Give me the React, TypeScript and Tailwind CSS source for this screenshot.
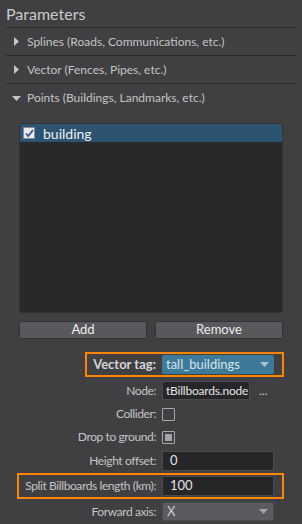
import React from 'react'

const sections = [
  { name: 'Splines (Roads, Communications, etc.)', open: false },
  { name: 'Vector (Fences, Pipes, etc.)', open: false },
  { name: 'Points (Buildings, Landmarks, etc.)', open: true },
]

function Arrow({ open }: { open: boolean }) {
  return open ? (
    <svg width="9" height="5" viewBox="0 0 9 5" className="mr-[6px]">
      <path d="M0 0h9L4.5 5z" fill="#c4c4c4" />
    </svg>
  ) : (
    <svg width="5" height="9" viewBox="0 0 5 9" className="ml-[2px] mr-[8px]">
      <path d="M0 0l5 4.5L0 9z" fill="#c4c4c4" />
    </svg>
  )
}

function Caret({ color }: { color: string }) {
  return (
    <svg width="9" height="5" viewBox="0 0 9 5">
      <path d="M0 0h9L4.5 5z" fill={color} />
    </svg>
  )
}

function Row({
  label,
  bold,
  highlight,
  className,
  children,
}: {
  label: string
  bold?: boolean
  highlight?: boolean
  className?: string
  children: React.ReactNode
}) {
  return (
    <div className={`flex justify-end pr-[18px] ${className ?? ''}`}>
      <div
        className={`flex items-center gap-[6px] ${
          highlight ? 'border-2 border-[#ff8400] pl-[6px] pr-[8px]' : 'pr-[10px]'
        }`}
      >
        <span
          className={`whitespace-nowrap text-right ${
            bold ? 'text-[13px] font-bold text-[#d4d4d4]' : 'text-[12px] tracking-[-0.4px] text-[#c4c4c4]'
          }`}
        >
          {label}
        </span>
        <div className="w-[112px] flex items-center">{children}</div>
      </div>
    </div>
  )
}

export default function App() {
  return (
    <div
      className="w-[302px] h-[524px] bg-[#404043] overflow-hidden"
      style={{ fontFamily: 'Lato, "Noto Sans", sans-serif' }}
    >
      <div className="px-[6px]">
        <div className="h-[28px] flex items-center border-b border-[#2a2a2c] text-[16px] text-[#cacaca]">
          Parameters
        </div>
        {sections.map((s, i) => (
          <div
            key={s.name}
            className={`h-[28px] flex items-center pl-[6px] text-[12px] text-[#c4c4c4] ${
              i < 2 ? 'border-b border-[#2a2a2c]' : ''
            }`}
          >
            <Arrow open={s.open} />
            {s.name}
          </div>
        ))}
      </div>

      <div className="ml-[19px] mr-[19px] mt-[11px] h-[190px] bg-[#29292b] border border-[#333336] rounded-[2px]">
        <div className="h-[18px] bg-[#2c5470] flex items-center pl-[3px]">
          <div className="w-[12px] h-[12px] bg-[#e8e8ec] border border-[#8a8a90] flex items-center justify-center">
            <svg width="9" height="9" viewBox="0 0 9 9">
              <path d="M1 4.5l2.2 2.5L8 1" stroke="#3a4fa0" strokeWidth="1.8" fill="none" />
            </svg>
          </div>
          <span className="ml-[8px] text-[14px] text-[#f0f0f0]">building</span>
        </div>
      </div>

      <div className="flex gap-[8px] mx-[19px] mt-[8px]">
        {['Add', 'Remove'].map((b) => (
          <div
            key={b}
            className="flex-1 h-[18px] bg-[#58595c] border border-[#343436] rounded-[2px] flex items-center justify-center text-[13px] text-[#ececec]"
          >
            {b}
          </div>
        ))}
      </div>

      <Row label="Vector tag:" bold highlight className="mt-[13px]">
        <div className="my-[1px] w-full h-[19px] bg-[#3d7999] rounded-[2px] flex items-center justify-between pl-[4px] pr-[5px] text-[13px] text-[#d6e4ec]">
          tall_buildings
          <Caret color="#a9c3d1" />
        </div>
      </Row>

      <Row label="Node:" className="mt-[4px]">
        <div className="w-[88px] h-[19px] bg-[#262628] border border-[#4a4a4d] flex items-center pl-[3px] text-[12px] tracking-[-0.2px] text-[#e4e4e4] overflow-hidden whitespace-nowrap">
          tBillboards.node
        </div>
        <span className="ml-[9px] text-[12px] text-[#c8c8c8] leading-none">...</span>
      </Row>

      <Row label="Collider:" className="mt-[5px]">
        <div className="w-[13px] h-[13px] border border-[#a8a8ac] rounded-[1px]" />
      </Row>

      <Row label="Drop to ground:" className="mt-[5px]">
        <div className="w-[13px] h-[13px] border border-[#a8a8ac] rounded-[1px] p-[2px]">
          <div className="w-full h-full bg-[#a4a4a8]" />
        </div>
      </Row>

      <Row label="Height offset:" className="mt-[5px]">
        <div className="w-full h-[20px] bg-[#262628] border border-[#4a4a4d] flex items-center pl-[7px] text-[13px] text-[#e4e4e4]">
          0
        </div>
      </Row>

      <Row label="Split Billboards length (km):" highlight className="mt-[2px]">
        <div className="my-[1px] w-full h-[20px] bg-[#262628] border border-[#4a4a4d] flex items-center pl-[7px] text-[13px] text-[#e4e4e4]">
          100
        </div>
      </Row>

      <Row label="Forward axis:" className="mt-[3px]">
        <div className="w-full h-[19px] bg-[#5a5b5e] border border-[#4a4a4d] rounded-[2px] flex items-center justify-between pl-[4px] pr-[5px] text-[13px] text-[#cfcfcf]">
          X
          <Caret color="#a4a4a8" />
        </div>
      </Row>
    </div>
  )
}
